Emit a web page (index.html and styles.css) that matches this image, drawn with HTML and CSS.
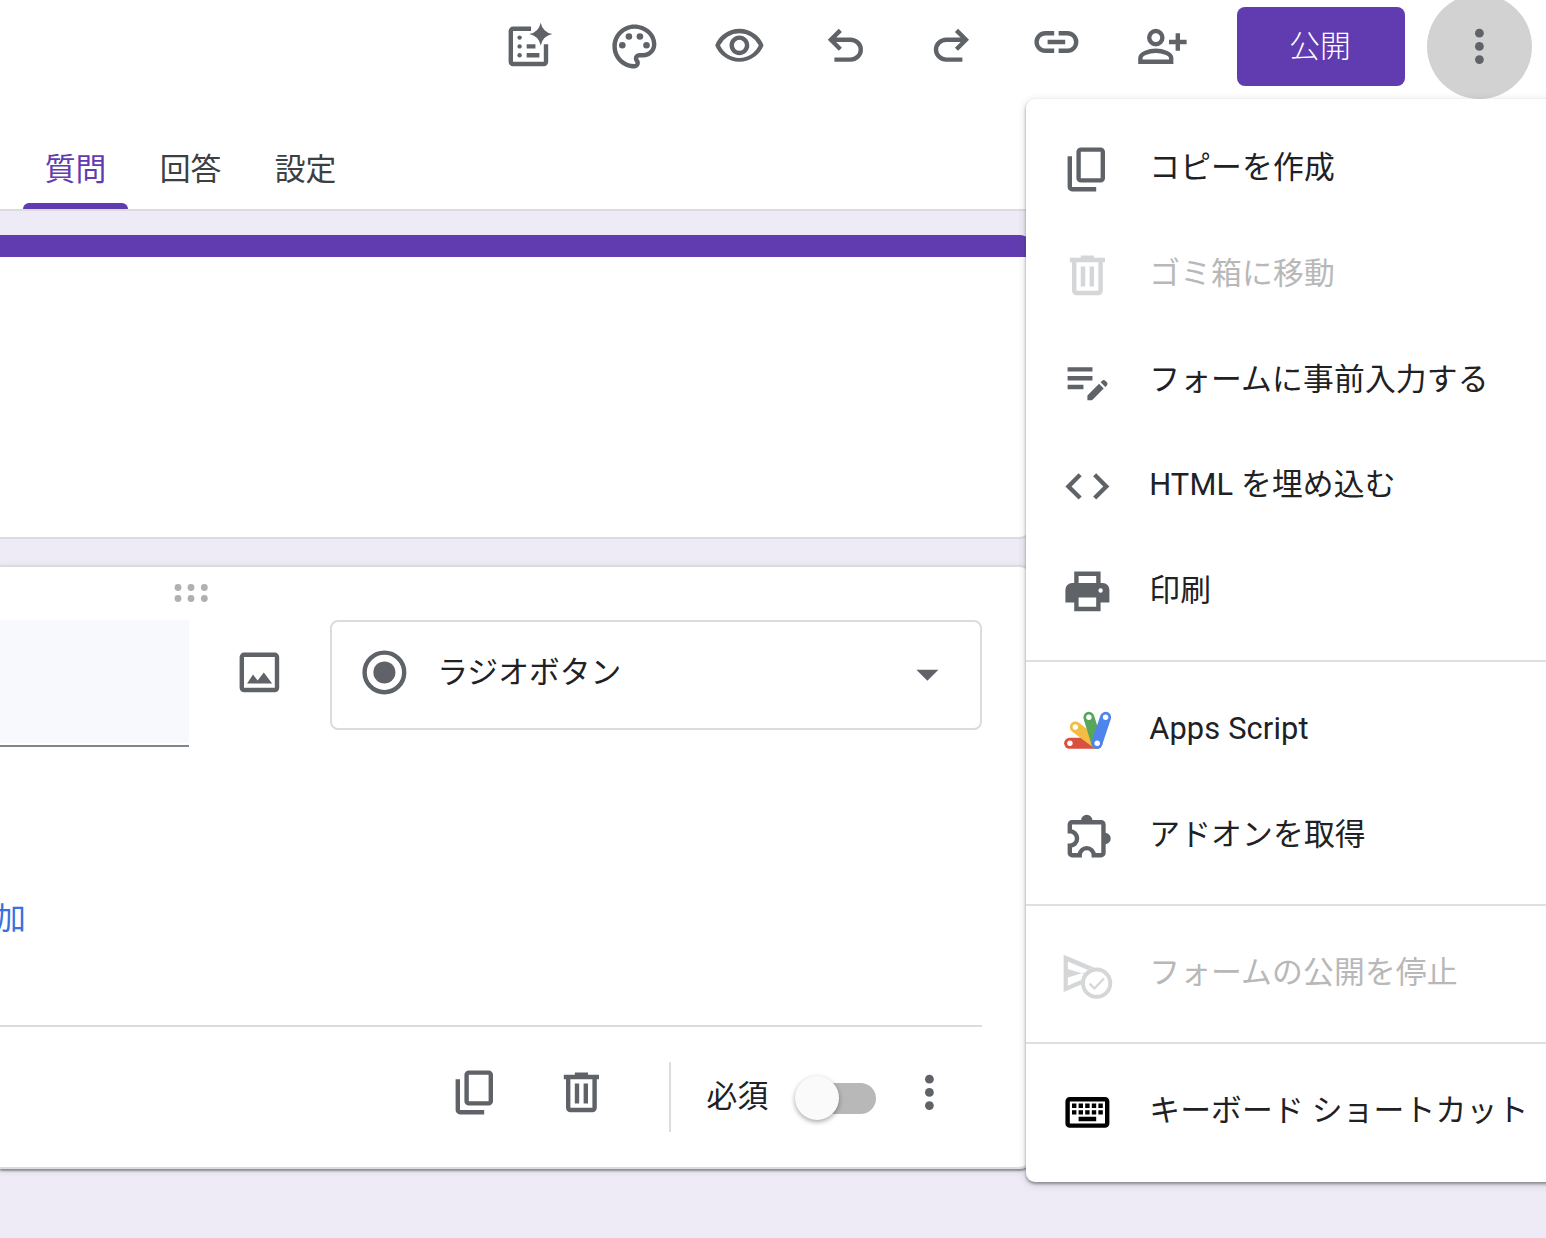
FILE: index.html
```html
<!DOCTYPE html>
<html lang="ja">

<head>
  <meta charset="UTF-8">
  <meta name="viewport" content="width=device-width, initial-scale=1.0">
  <title>フォーム</title>
  <link rel="stylesheet" href="styles.css">
</head>

<body>

  <!-- shared icons -->
  <svg class="sprite" width="0" height="0">
    <symbol id="icon-copy" viewBox="0 0 24 24">
      <path fill-rule="evenodd" d="M9 2h9a2 2 0 0 1 2 2v12a2 2 0 0 1-2 2H9a2 2 0 0 1-2-2V4a2 2 0 0 1 2-2zm0 2v12h9V4zM3 6h2v14h11v2H5a2 2 0 0 1-2-2z"/>
    </symbol>
    <symbol id="icon-delete" viewBox="0 0 24 24">
      <path fill-rule="evenodd" d="M9 3h6v1h5v2h-1v13a2 2 0 0 1-2 2H7a2 2 0 0 1-2-2V6H4V4h5zM7 6v13h10V6zm2 2h2v9H9zm4 0h2v9h-2z"/>
    </symbol>
    <symbol id="icon-more" viewBox="0 0 24 24">
      <circle cx="12" cy="6" r="2"/>
      <circle cx="12" cy="12" r="2"/>
      <circle cx="12" cy="18" r="2"/>
    </symbol>
  </svg>

  <div class="header">
    <div class="toolbar">
      <div class="tool">
        <svg class="icon" viewBox="0 0 24 24">
          <path d="M13.2 3H5a2 2 0 0 0-2 2v14a2 2 0 0 0 2 2h14a2 2 0 0 0 2-2v-8h-2v8H5V5h8.200z"/>
          <path d="M17.600 1.200Q18.500 5.500 22.900 6.400 18.500 7.300 17.600 11.600 16.700 7.300 12.400 6.400 16.700 5.500 17.600 1.200zM11.200 11h4v2h-4zM11.200 15H17v2h-5.800z"/>
          <circle cx="8" cy="8" r="1"/>
          <circle cx="8" cy="12" r="1"/>
          <circle cx="8" cy="16" r="1"/>
        </svg>
      </div>
      <div class="tool">
        <svg class="icon" viewBox="0 0 24 24">
          <path d="M12 22C6.490 22 2 17.510 2 12S6.490 2 12 2s10 4.040 10 9c0 3.310-2.690 6-6 6h-1.770c-.28 0-.5.22-.5.5 0 .12.05.23.13.33.41.47.64 1.060.64 1.670A2.500 2.500 0 0 1 12 22zm0-18c-4.410 0-8 3.590-8 8s3.590 8 8 8c.28 0 .5-.22.5-.5a.54.54 0 0 0-.14-.35c-.41-.46-.63-1.050-.63-1.650a2.500 2.500 0 0 1 2.500-2.500H16c2.210 0 4-1.790 4-4 0-3.860-3.590-7-8-7z"/>
          <circle cx="6.500" cy="11.500" r="1.500"/>
          <circle cx="9.500" cy="7.500" r="1.500"/>
          <circle cx="14.500" cy="7.500" r="1.500"/>
          <circle cx="17.500" cy="11.500" r="1.500"/>
        </svg>
      </div>
      <div class="tool">
        <svg class="icon" viewBox="0 0 24 24">
          <path d="M12 6a9.770 9.770 0 0 1 8.820 5.500 9.647 9.647 0 0 1-17.640 0A9.770 9.770 0 0 1 12 6m0-2C7 4 2.730 7.110 1 11.500 2.730 15.890 7 19 12 19s9.270-3.110 11-7.500C21.270 7.110 17 4 12 4zm0 5a2.500 2.500 0 0 1 0 5 2.500 2.500 0 0 1 0-5m0-2c-2.480 0-4.500 2.020-4.500 4.500S9.520 16 12 16s4.500-2.020 4.500-4.500S14.480 7 12 7z"/>
        </svg>
      </div>
      <div class="tool">
        <svg class="icon line" viewBox="0 0 24 24">
          <path d="M9.700 4.700 5.400 9l4.300 4.300M5.400 9H14.300a4.700 4.500 0 0 1 0 9H7"/>
        </svg>
      </div>
      <div class="tool">
        <svg class="icon line" viewBox="0 0 24 24">
          <path d="M14.300 4.700 18.600 9l-4.300 4.300M18.600 9H9.700a4.700 4.500 0 0 0 0 9H17"/>
        </svg>
      </div>
      <div class="tool">
        <svg class="icon line" viewBox="0 0 24 24">
          <path d="M11 6H7a4 4 0 0 0 0 8h4M13 6h4a4 4 0 0 1 0 8h-4M8 10h8"/>
        </svg>
      </div>
      <div class="tool">
        <svg class="icon line" viewBox="0 0 24 24">
          <circle cx="9" cy="8" r="3"/>
          <path d="M2 19v-1.700C2 15.200 6 14 9 14s7 1.200 7 3.300V19zM19 6v8M15 10h8"/>
        </svg>
      </div>
      <button class="publish">公開</button>
      <div class="tool active"><svg class="icon"><use href="#icon-more"/></svg></div>
    </div>

    <div class="tabs">
      <div class="tab selected">質問</div>
      <div class="tab">回答</div>
      <div class="tab">設定</div>
    </div>
  </div>

  <div class="form">
    <div class="card title-card"></div>

    <div class="card question">
      <svg class="drag" viewBox="0 0 34 20">
        <circle cx="4" cy="4.500" r="3.400"/>
        <circle cx="17" cy="4.500" r="3.400"/>
        <circle cx="30.300" cy="4.500" r="3.400"/>
        <circle cx="4" cy="15.500" r="3.400"/>
        <circle cx="17" cy="15.500" r="3.400"/>
        <circle cx="30.300" cy="15.500" r="3.400"/>
      </svg>

      <div class="question-row">
        <div class="question-input"></div>
        <svg class="icon image-icon" viewBox="0 0 24 24">
          <path fill-rule="evenodd" d="M5 3h14a2 2 0 0 1 2 2v14a2 2 0 0 1-2 2H5a2 2 0 0 1-2-2V5a2 2 0 0 1 2-2zm0 2v14h14V5z"/>
          <path d="M6.400 17 9.100 13l2.100 2.700L14 12.100 17.800 17z"/>
        </svg>
        <div class="type-select">
          <svg class="icon" viewBox="0 0 24 24">
            <circle cx="12" cy="12" r="9" fill="none" stroke="#5f6368" stroke-width="2"/>
            <circle cx="12" cy="12" r="5"/>
          </svg>
          <span class="type-name">ラジオボタン</span>
          <svg class="icon" viewBox="0 0 24 24"><path d="M7 10.800l5 5 5-5z"/></svg>
        </div>
      </div>

      <div class="add-option">加</div>

      <div class="question-footer">
        <svg class="icon"><use href="#icon-copy"/></svg>
        <svg class="icon"><use href="#icon-delete"/></svg>
        <div class="divider"></div>
        <span class="required">必須</span>
        <div class="toggle"><div class="thumb"></div></div>
        <svg class="icon"><use href="#icon-more"/></svg>
      </div>
    </div>
  </div>

  <div class="menu">
    <div class="menu-item">
      <svg class="icon"><use href="#icon-copy"/></svg>
      <span>コピーを作成</span>
    </div>
    <div class="menu-item disabled">
      <svg class="icon"><use href="#icon-delete"/></svg>
      <span>ゴミ箱に移動</span>
    </div>
    <div class="menu-item">
      <svg class="icon" viewBox="0 0 24 24">
        <path d="M3 10h11.300v2H3zM3 6h11.300v2H3zM3 14h7.200v2H3zM18.010 12.870l.71-.71c.39-.39 1.020-.39 1.410 0l.71.71c.39.39.39 1.020 0 1.410l-.71.71zM17.300 13.580l-5.300 5.300V21h2.120l5.300-5.300z"/>
      </svg>
      <span>フォームに事前入力する</span>
    </div>
    <div class="menu-item">
      <svg class="icon" viewBox="0 0 24 24">
        <path d="M9.400 16.600L4.800 12l4.600-4.600L8 6l-6 6 6 6zM14.600 16.600l4.600-4.600-4.600-4.600L16 6l6 6-6 6z"/>
      </svg>
      <span>HTML を埋め込む</span>
    </div>
    <div class="menu-item">
      <svg class="icon" viewBox="0 0 24 24">
        <path fill-rule="evenodd" d="M6 3h12v5.200h1a3 3 0 0 1 3 3V17h-4v4H6v-4H2v-5.800a3 3 0 0 1 3-3h1zM8 5v3.200h8V5zM8 14.800V19h8v-4.200zM18 10.600a1 1 0 1 0 0 2 1 1 0 0 0 0-2z"/>
      </svg>
      <span>印刷</span>
    </div>

    <div class="separator"></div>

    <div class="menu-item">
      <svg class="icon apps-script" viewBox="0 0 52.800 52.800">
        <path stroke="#d9503f" d="M8.600 39.300H35.900"/>
        <path stroke="#f3bd42" d="M14.300 23 35.900 39.300"/>
        <path stroke="#58a55c" d="M27.900 13.300 35.900 39.300"/>
        <path stroke="#5084ed" d="M44.600 13.300 35.900 39.300"/>
        <circle cx="8.900" cy="39.300" r="2.700"/>
        <circle cx="14.300" cy="23" r="2.700"/>
        <circle cx="27.900" cy="13.300" r="2.700"/>
        <circle cx="44.600" cy="13.300" r="2.700"/>
        <circle cx="36.200" cy="39.300" r="2.700"/>
      </svg>
      <span>Apps Script</span>
    </div>
    <div class="menu-item">
      <svg class="icon" viewBox="0 0 24 24">
        <path fill="none" stroke="#5f6368" stroke-width="2" d="M5 6H18.300a1 1 0 0 1 1 1V20a1 1 0 0 1-1 1H14.900a3.200 3.200 0 0 0-6.400 0H5a1 1 0 0 1-1-1V16.700a3.300 3.300 0 0 0 0-6.600V7a1 1 0 0 1 1-1z"/>
        <path d="M9.100 5.200a2.600 2.600 0 0 1 5.200 0zM20 10.800a2.600 2.600 0 0 1 0 5.200z"/>
      </svg>
      <span>アドオンを取得</span>
    </div>

    <div class="separator"></div>

    <div class="menu-item disabled">
      <svg class="icon" viewBox="0 0 24 24">
        <path fill-rule="evenodd" d="M1.200 20V3.100L15.200 9a7 7 0 0 0-6 7.600zM3.100 17.200 9.400 14.400 11 12.200l-1.600-.7L3.100 13.400zM3.100 6.100V9.600L9.400 11.500 11.500 11l1.300-.8z"/>
        <circle cx="16.200" cy="16" r="6.200" fill="none" stroke="#5f6368" stroke-width="1.800"/>
        <path fill="none" stroke="#5f6368" stroke-width="1" d="M13 16.200l2.200 2.200 4.300-4.500"/>
      </svg>
      <span>フォームの公開を停止</span>
    </div>

    <div class="separator"></div>

    <div class="menu-item">
      <svg class="icon keyboard" viewBox="0 0 24 24">
        <path fill-rule="evenodd" d="M4 5h16a2 2 0 0 1 2 2v10a2 2 0 0 1-2 2H4a2 2 0 0 1-2-2V7a2 2 0 0 1 2-2zm0 2v10h16V7z"/>
        <path d="M5 8h2v2H5zM8 8h2v2H8zM11 8h2v2h-2zM14 8h2v2h-2zM17 8h2v2h-2zM5 11h2v2H5zM8 11h2v2H8zM11 11h2v2h-2zM14 11h2v2h-2zM17 11h2v2h-2zM8 14h8v2H8z"/>
      </svg>
      <span>キーボード ショートカット</span>
    </div>
  </div>

</body>

</html>
```

FILE: styles.css
```css
* {
  box-sizing: border-box;
}

body {
  position: relative;
  margin: 0;
  height: 1238px;
  overflow: hidden;
  background-color: #eeebf7;
  font-family: Roboto, "Noto Sans CJK JP", sans-serif;
  font-size: 30.8px;
  line-height: 44px;
  color: #202124;
}

.sprite {
  position: absolute;
}

.icon {
  display: block;
  flex: none;
  width: 52.8px;
  height: 52.8px;
  fill: #5f6368;
}

.icon.line {
  fill: none;
  stroke: #5f6368;
  stroke-width: 2;
}

/* header */

.header {
  height: 211px;
  background-color: #fff;
  border-bottom: 2px solid #dadce0;
}

.toolbar {
  display: flex;
  align-items: center;
  height: 93px;
  padding-left: 475.8px;
}

.tool {
  display: flex;
  flex: none;
  align-items: center;
  justify-content: center;
  width: 105.6px;
  height: 105px;
}

.tool.active {
  width: 105px;
  border-radius: 50%;
  background-color: #d2d2d2;
}

.publish {
  flex: none;
  width: 168px;
  height: 79px;
  margin: 0 22px;
  padding: 0 2px 0 0;
  border: none;
  border-radius: 8px;
  background-color: #613cb0;
  color: #fff;
  font: inherit;
  font-weight: 300;
}

.tabs {
  display: flex;
  gap: 10px;
  height: 116px;
  padding-left: 23px;
}

.tab {
  display: flex;
  flex-direction: column;
  justify-content: space-between;
  width: 105px;
  padding-top: 55px;
  text-align: center;
  color: #3c4043;
}

.tab.selected {
  color: #613cb0;
}

.tab.selected::after {
  content: "";
  height: 6px;
  border-radius: 6px 6px 0 0;
  background-color: #613cb0;
}

/* form */

.form {
  display: flex;
  flex-direction: column;
  gap: 26px;
  width: 1032px;
  padding-top: 24px;
}

.card {
  border: 2px solid #dadce0;
  border-left: none;
  border-radius: 0 12px 12px 0;
  background-color: #fff;
}

.title-card {
  height: 304px;
  border-top: 22px solid #613cb0;
}

.question {
  height: 604px;
  box-shadow: 0 2px 2px rgba(60, 64, 67, 0.5), 0 2px 6px rgba(60, 64, 67, 0.15);
}

.drag {
  display: block;
  width: 34px;
  height: 20px;
  margin: 16px 0 17px 174px;
  fill: #b0b0b0;
}

.question-row {
  display: flex;
  align-items: flex-start;
  height: 127px;
}

.question-input {
  width: 189px;
  height: 127px;
  border-bottom: 2px solid #80868b;
  background: linear-gradient(#f8f9fc 123px, #fff 123px);
}

.image-icon {
  margin: 26px 45px 0 43.6px;
}

.type-select {
  display: flex;
  align-items: center;
  width: 652px;
  height: 110px;
  padding: 0 27px 5px 26px;
  border: 2px solid #dadce0;
  border-radius: 8px;
}

.type-name {
  flex: 1;
  padding-left: 26px;
}

.add-option {
  margin: 150px 0 0 -5px;
  color: #3970e0;
}

.question-footer {
  display: flex;
  align-items: center;
  width: 982px;
  height: 136px;
  margin-top: 84px;
  padding: 0 26px 4px 449px;
  border-top: 2px solid #dadce0;
}

.question-footer .icon {
  margin-right: 53px;
}

.question-footer .icon:last-child {
  margin: 0 0 0 27px;
}

.divider {
  width: 2px;
  height: 70px;
  margin: 9px 36px 0 8px;
  background-color: #dadce0;
}

.required {
  padding-top: 9px;
}

.toggle {
  flex: none;
  width: 79px;
  height: 31px;
  margin: 13px 0 0 29px;
  border-radius: 16px;
  background-color: #b8b8b8;
}

.thumb {
  width: 44px;
  height: 44px;
  margin: -7px 0 0 -2px;
  border-radius: 50%;
  background-color: #fafafa;
  box-shadow: 0 2px 5px rgba(0, 0, 0, 0.35);
}

/* overflow menu */

.menu {
  position: absolute;
  top: 99px;
  left: 1026px;
  width: 560px;
  padding: 17.6px 0 17px;
  border-radius: 9px;
  background-color: #fff;
  box-shadow: 0 2px 3px rgba(60, 64, 67, 0.5), 0 2px 8px rgba(60, 64, 67, 0.2);
}

.menu-item {
  display: flex;
  align-items: center;
  gap: 35px;
  height: 105.6px;
  padding-left: 35.4px;
  letter-spacing: 0.15px;
  white-space: nowrap;
}

.menu-item span {
  padding-bottom: 2px;
}

.menu-item.disabled {
  color: #b8b8b8;
}

.menu-item.disabled .icon {
  opacity: 0.26;
}

.separator {
  height: 2px;
  margin: 15.4px 0;
  background-color: #dfdfdf;
}

.apps-script path {
  fill: none;
  stroke-width: 11;
  stroke-linecap: round;
}

.apps-script circle {
  fill: #fff;
}

.icon.keyboard {
  fill: #000;
}
```
